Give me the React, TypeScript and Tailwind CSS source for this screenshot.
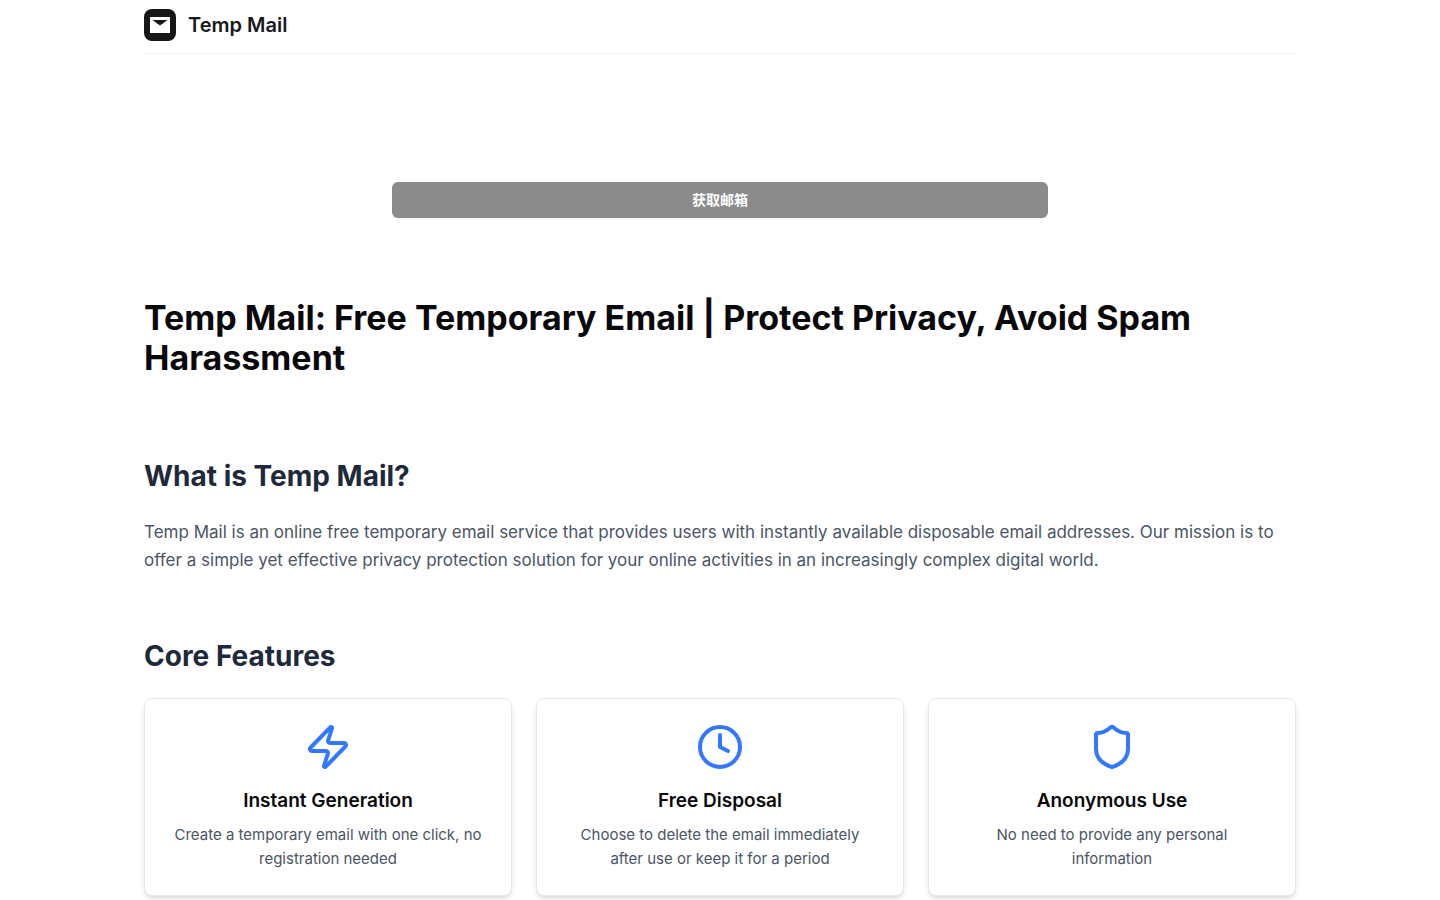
import { Clock, Shield, Zap, type LucideIcon } from "lucide-react";

type TFeature = {
  icon: LucideIcon;
  title: string;
  description: string;
};

const features: TFeature[] = [
  {
    icon: Zap,
    title: "Instant Generation",
    description: "Create a temporary email with one click, no registration needed",
  },
  {
    icon: Clock,
    title: "Free Disposal",
    description: "Choose to delete the email immediately after use or keep it for a period",
  },
  {
    icon: Shield,
    title: "Anonymous Use",
    description: "No need to provide any personal information",
  },
];

function Logo() {
  return (
    <svg viewBox="0 0 32 32" className="w-8 h-8" aria-hidden="true">
      <rect width="32" height="32" rx="8" fill="#171717" />
      <rect x="6" y="8" width="20" height="16" rx="0.5" fill="#fff" />
      <path d="M8.5 11h15l-7.5 5.5z" fill="#171717" />
    </svg>
  );
}

function Header() {
  return (
    <header className="flex h-[54px] items-center border-b border-gray-100 pb-1">
      <a href="#" className="flex items-center gap-3">
        <Logo />
        <span className="text-xl font-semibold text-zinc-900">Temp Mail</span>
      </a>
    </header>
  );
}

function FeatureCard({ icon: Icon, title, description }: TFeature) {
  return (
    <div className="flex flex-col items-center rounded-lg border border-gray-200 bg-white px-7 py-6 text-center shadow-md">
      <Icon className="w-12 h-12 mb-4 text-[#3478ff]" />
      <h3 className="mb-2 text-[19px] leading-7 font-semibold">{title}</h3>
      <p className="text-[15px] leading-6 text-gray-600">{description}</p>
    </div>
  );
}

function App() {
  return (
    <div className="min-h-screen bg-white font-[Inter,'Noto_Sans_CJK_SC',sans-serif] text-zinc-950">
      <div className="mx-auto max-w-6xl">
        <Header />
        <main>
          <div className="mx-auto max-w-[656px] pt-32">
            <button
              type="button"
              disabled
              className="h-9 w-full rounded-md bg-[#8b8b8c] text-sm font-bold text-white shadow-xs"
            >
              获取邮箱
            </button>
          </div>
          <h1 className="mt-20 text-[34px] leading-10 font-bold">
            Temp Mail: Free Temporary Email | Protect Privacy, Avoid Spam Harassment
          </h1>
          <section className="mt-20">
            <h2 className="mb-6 text-[28px] leading-9 font-bold text-gray-800">What is Temp Mail?</h2>
            <p className="text-[17px] leading-7 text-gray-600">
              Temp Mail is an online free temporary email service that provides users with instantly
              available disposable email addresses. Our mission is to offer a simple yet effective
              privacy protection solution for your online activities in an increasingly complex
              digital world.
            </p>
          </section>
          <section className="mt-16">
            <h2 className="mb-6 text-[28px] leading-9 font-bold text-gray-800">Core Features</h2>
            <div className="grid grid-cols-1 gap-6 md:grid-cols-3">
              {features.map((feature) => (
                <FeatureCard key={feature.title} {...feature} />
              ))}
            </div>
          </section>
        </main>
      </div>
    </div>
  );
}

export default App;
